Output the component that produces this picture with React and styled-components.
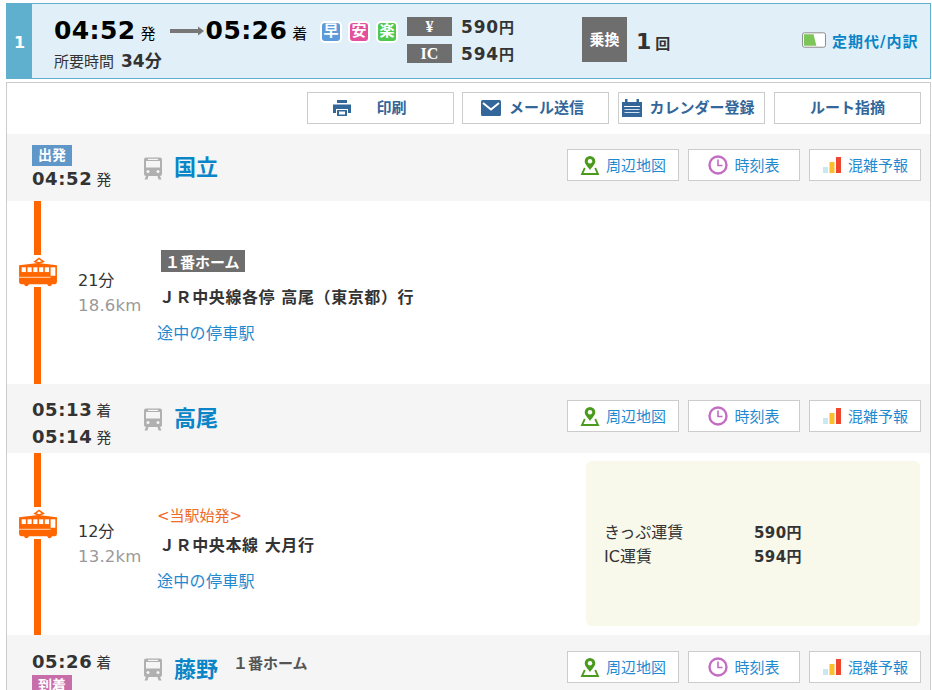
import React from "react";
import styled, { createGlobalStyle } from "styled-components";

const Global = createGlobalStyle`
  html, body { margin: 0; padding: 0; height: 690px; overflow: hidden; background: #fff; }
  body { font-family: "DejaVu Sans", "Noto Sans CJK JP", sans-serif; color: #333; }
  * { box-sizing: border-box; }
`;
const Page = styled.div`
  width: 932px; height: 690px; overflow: hidden; padding: 3px 1px 0 6px;
`;
const Summary = styled.div`
  height: 76px; display: flex; background: #e1f0f8; border: 1px solid #5fb0ce;
`;
const RouteNo = styled.div`
  width: 25px; background: #5fb0ce; color: #fff; font-weight: 700; font-size: 16px;
  display: flex; align-items: center; justify-content: center; padding-top: 2px;
`;
const TimeBlock = styled.div`
  width: 288px; padding: 10px 0 0 22px;
`;
const TimeLine = styled.div`
  display: flex; align-items: baseline; height: 33px; color: #000;
`;
const BigTime = styled.span`
  font-size: 25px; font-weight: 700; line-height: 33px; letter-spacing: 0.4px;
`;
const Suffix = styled.span`
  font-size: 15px; margin-left: 5px;
`;
const ArrowBox = styled.svg`
  width: 34px; height: 10px; margin: 1px 2px 0 14px; align-self: center;
`;
const Duration = styled.div`
  display: flex; align-items: baseline; font-size: 15px; color: #333; margin-top: 0;
  & > b { font-size: 17px; margin-left: 7px; }
`;
const Badges = styled.div`
  width: 87px; display: flex; gap: 6px; padding-top: 17px;
`;
const Badge = styled.span`
  width: 22px; height: 22px; border-radius: 5px; background: ${p => p.$c}; border: 2px solid #fff;
  color: #fff; font-size: 15px; font-weight: 700; line-height: 17px; text-align: center; overflow: hidden;
`;
const Fares = styled.div`
  width: 175px; padding-top: 13px; display: flex; flex-direction: column; gap: 8px;
`;
const FareRow = styled.div`
  display: flex; align-items: center; height: 19px;
`;
const FareTag = styled.span`
  width: 45px; height: 19px; background: #6e6e6e; color: #fff; font-family: "Liberation Serif", serif;
  font-weight: 700; font-size: 16px; line-height: 19px; text-align: center;
`;
const FareValue = styled.span`
  font-size: 17px; font-weight: 700; color: #333; margin-left: 9px; letter-spacing: 0.8px;
  & > small { font-size: 15px; margin-left: 0; letter-spacing: 0; }
`;
const Transfer = styled.div`
  width: 220px; display: flex; padding-top: 13px;
`;
const TransferTag = styled.div`
  width: 45px; height: 45px; background: #6e6e6e; color: #fff; font-size: 15px; font-weight: 700;
  display: flex; align-items: center; justify-content: center; padding-bottom: 2px;
`;
const TransferCount = styled.div`
  margin-left: 9px; display: flex; align-items: baseline; color: #333; font-weight: 700; height: 45px; padding-top: 12px;
  font-size: 22px;
  & > small { font-size: 15px; margin-left: 4px; }
`;
const Pass = styled.a`
  display: flex; align-items: center; gap: 6px; height: 20px; margin-top: 26px;
  color: #0a85c7; font-size: 15px; font-weight: 700; white-space: nowrap; letter-spacing: 1px;
`;
const Main = styled.div`
  margin-top: 3px; height: 700px; border: 1px solid #ccc; border-bottom: 0;
`;
const Toolbar = styled.div`
  height: 51px; padding: 9px 9px 0 0; display: flex; justify-content: flex-end; gap: 9px;
  & > :first-child { margin-right: -1px; }
`;
const ToolButton = styled.a`
  width: 147px; height: 32px; border: 1px solid #ccc; background: #fff; color: #336699;
  font-size: 15px; font-weight: 700; line-height: 30px; display: flex; align-items: flex-start; justify-content: center;
  gap: ${p => p.$gap || 8}px; padding-right: ${p => p.$pr || 0}px; white-space: nowrap;
  & > svg { align-self: center; }
`;
const Station = styled.div`
  height: ${p => p.$h}px; background: #f5f5f5; display: flex; align-items: center;
`;
const StationTimes = styled.div`
  width: 112px; padding: ${p => p.$pt || 0}px 0 0 25px; flex: none; display: flex; flex-direction: column;
  align-self: ${p => p.$start ? "flex-start" : "center"};
`;
const Tag = styled.span`
  width: 40px; height: 21px; background: ${p => p.$c}; color: #fff; font-size: 14px; font-weight: 700;
  line-height: 20px; text-align: center; display: block; flex: none;
`;
const TimeRow = styled.div`
  height: ${p => p.$h || 27}px; display: flex; align-items: center; color: #333; white-space: nowrap;
  & > b { font-size: 18px; letter-spacing: 0.6px; }
  & > span { font-size: 15px; margin-left: 4px; }
`;
const StationIcon = styled.svg`
  width: 20px; height: 24px; margin-left: 24px; flex: none;
`;
const StationName = styled.a`
  font-size: 22px; font-weight: 700; color: #0a85c7; margin-left: 11px; white-space: nowrap; padding-bottom: 5px;
`;
const Platform = styled.span`
  font-size: 15px; font-weight: 700; color: #555; margin: -14px 0 0 15px; white-space: nowrap;
`;
const StationActions = styled.div`
  margin-left: auto; padding-right: 9px; display: flex; gap: 9px; align-self: flex-start;
  margin-top: ${p => p.$mt}px;
`;
const ActionButton = styled.a`
  width: 112px; height: 32px; background: #fff; border: 1px solid #ccc; color: #1f8ad0; font-size: 15px;
  line-height: 32px; display: flex; align-items: flex-start; justify-content: center; gap: 6px; white-space: nowrap;
  & > svg { align-self: center; }
`;
const Segment = styled.div`
  height: ${p => p.$h}px; display: flex; position: relative;
`;
const LineCol = styled.div`
  width: 71px; flex: none; position: relative;
  &::before { content: ""; position: absolute; left: 27px; top: 0; bottom: 0; width: 7px; background: #f60; }
`;
const TrainMark = styled.svg`
  position: absolute; left: 11px; top: 54px; width: 40px; height: 32px; background: #fff;
`;
const RideTime = styled.div`
  width: 79px; flex: none; padding-top: ${p => p.$top}px; font-size: 16px; color: #333; line-height: 25px;
  & > div + div { color: #999; font-size: 16.5px; letter-spacing: 0.2px; }
`;
const RideInfo = styled.div`
  flex: 1; padding-top: ${p => p.$top}px; min-width: 0;
`;
const PlatformTag = styled.span`
  display: inline-block; margin-left: 4px; background: #6e6e6e; color: #fff; font-size: 15px; font-weight: 700;
  height: 22px; line-height: 26px; padding: 0 0 0 4px; width: 84px; white-space: nowrap; overflow: hidden;
`;
const Origin = styled.div`
  color: #f06a28; font-size: 15px; height: 22px; line-height: 24px;
`;
const LineName = styled.div`
  font-size: 16px; font-weight: 700; color: #333; margin: ${p => p.$mt}px 0 0 2px; line-height: 24px; white-space: nowrap;
  letter-spacing: 0.6px;
`;
const Stops = styled.a`
  display: block; font-size: 16px; color: #1f8ad0; margin-top: 12px; line-height: 24px; letter-spacing: 0.3px;
`;
const FarePanel = styled.div`
  position: absolute; right: 10px; top: 8px; width: 334px; height: 165px; background: #f8f8eb; border-radius: 6px;
  padding: 58px 0 0 18px; font-size: 16px; color: #333;
`;
const PanelRow = styled.div`
  display: flex; height: 24px; align-items: center;
  & > span { width: 150px; } & > b { font-size: 15px; letter-spacing: 0.4px; }
`;

const PinIcon = () => (
  <svg width="20" height="20" viewBox="0 0 20 20" fill="none">
    <path d="M10 1a5.300 5.300 0 0 1 5.300 5.300c0 3-3.300 5.700-5.300 8.700-2-3-5.300-5.700-5.300-8.700A5.300 5.300 0 0 1 10 1z" fill="#4a9a1e" />
    <circle cx="10" cy="6.300" r="2.200" fill="#fff" />
    <path d="M4.800 13L2 19h16l-2.800-6" stroke="#4a9a1e" strokeWidth="1.800" fill="none" />
  </svg>
);
const ClockIcon = () => (
  <svg width="20" height="20" viewBox="0 0 20 20" fill="none">
    <circle cx="10" cy="10" r="8.500" stroke="#c46cc4" strokeWidth="2.400" />
    <path d="M10 4.500V10.500H14.500" stroke="#c46cc4" strokeWidth="1.600" />
  </svg>
);
const BarsIcon = () => (
  <svg width="20" height="20" viewBox="0 0 20 20">
    <rect x="1" y="12" width="5" height="6" fill="#c9e8f2" />
    <rect x="7.500" y="7" width="5" height="11" fill="#fbbe2e" />
    <rect x="14" y="2" width="5" height="16" fill="#f0452f" />
  </svg>
);
const StationActionsSet = ({ mt }) => (
  <StationActions $mt={mt}>
    <ActionButton><PinIcon />周辺地図</ActionButton>
    <ActionButton><ClockIcon />時刻表</ActionButton>
    <ActionButton><BarsIcon />混雑予報</ActionButton>
  </StationActions>
);
const Rail = () => (
  <StationIcon viewBox="0 0 20 24">
    <path d="M3 1.500h14a2 2 0 0 1 2 2V18a2 2 0 0 1-2 2H3a2 2 0 0 1-2-2V3.500a2 2 0 0 1 2-2z" fill="#b0b0b0" />
    <rect x="3" y="5" width="14" height="6.500" fill="#f5f5f5" />
    <rect x="5" y="2.800" width="10" height="1.200" fill="#f5f5f5" />
    <circle cx="5" cy="15.500" r="1.500" fill="#f5f5f5" /><circle cx="15" cy="15.500" r="1.500" fill="#f5f5f5" />
    <path d="M3 20l-1.500 3.500h3L5.500 20zM17 20l1.500 3.500h-3L14.500 20z" fill="#b0b0b0" />
  </StationIcon>
);
const Tram = () => (
  <TrainMark viewBox="1 0 38 30">
    <path d="M17 6l4-3 4 3-4 1.500z" fill="none" stroke="#f60" strokeWidth="1.500" />
    <path d="M2 9.500l18-2 18 2v16a2 2 0 0 1-2 2H4a2 2 0 0 1-2-2z" fill="#f60" />
    {[4.500, 10, 15.500, 21, 26.500].map(x => <rect key={x} x={x} y="11.500" width="4" height="4.500" fill="#fff" />)}
    <rect x="32" y="11.500" width="4.500" height="8" fill="#fff" />
    <rect x="2" y="20.500" width="30" height="1" fill="#ffd0a8" />
    <circle cx="9" cy="27.500" r="2" fill="#f60" /><circle cx="31" cy="27.500" r="2" fill="#f60" />
  </TrainMark>
);

export default function App() {
  return (
    <Page>
      <Global />
      <Summary>
        <RouteNo>1</RouteNo>
        <TimeBlock>
          <TimeLine>
            <BigTime>04:52</BigTime><Suffix>発</Suffix>
            <ArrowBox viewBox="0 0 34 10"><path d="M0 3h28V0.500l6 4.500-6 4.500V7H0z" fill="#777" /></ArrowBox>
            <BigTime>05:26</BigTime><Suffix>着</Suffix>
          </TimeLine>
          <Duration>所要時間<b>34分</b></Duration>
        </TimeBlock>
        <Badges>
          <Badge $c="#5b9bdc">早</Badge>
          <Badge $c="#e3509b">安</Badge>
          <Badge $c="#4fc94f">楽</Badge>
        </Badges>
        <Fares>
          <FareRow><FareTag>¥</FareTag><FareValue>590<small>円</small></FareValue></FareRow>
          <FareRow><FareTag>IC</FareTag><FareValue>594<small>円</small></FareValue></FareRow>
        </Fares>
        <Transfer>
          <TransferTag>乗換</TransferTag>
          <TransferCount>1<small>回</small></TransferCount>
        </Transfer>
        <Pass>
          <svg width="24" height="17" viewBox="0 0 25 17">
            <rect x=".5" y=".5" width="24" height="15" rx="2" fill="#fff" stroke="#888" />
            <path d="M2 2h10l3 12H2z" fill="#7cc558" />
          </svg>
          定期代/内訳
        </Pass>
      </Summary>
      <Main>
        <Toolbar>
          <ToolButton $gap={24} $pr={22}>
            <svg width="20" height="18" viewBox="0 0 20 18">
              <path d="M5 1h10v3H5zM1 5.500h18V14h-3v-4H4v4H1z" fill="#336699" />
              <path d="M5 11h10v6H5z" fill="#336699" /><path d="M7 12.500h6v3H7z" fill="#fff" />
            </svg>
            印刷
          </ToolButton>
          <ToolButton $pr={6}>
            <svg width="20" height="16" viewBox="0 0 20 16">
              <rect width="20" height="16" rx="1.500" fill="#336699" />
              <path d="M2 3l8 6.500L18 3" stroke="#fff" strokeWidth="2" fill="none" />
            </svg>
            メール送信
          </ToolButton>
          <ToolButton $gap={7} $pr={6}>
            <svg width="20" height="20" viewBox="0 0 20 20">
              <path d="M0 4h20v15H0z" fill="#336699" /><path d="M2 8h16v1H2z" fill="#fff" />
              <path d="M3 1h2.500v5H3zM14.500 1H17v5h-2.500z" fill="#336699" />
              <path d="M2.500 11h15v1h-15zM2.500 14h15v1h-15z" fill="#cfe0ee" />
            </svg>
            カレンダー登録
          </ToolButton>
          <ToolButton>ルート指摘</ToolButton>
        </Toolbar>

        <Station $h={67}>
          <StationTimes>
            <Tag $c="#5f97c9">出発</Tag>
            <TimeRow $h={24}><b>04:52</b><span>発</span></TimeRow>
          </StationTimes>
          <Rail />
          <StationName>国立</StationName>
          <StationActionsSet mt={15} />
        </Station>
        <Segment $h={183}>
          <LineCol><Tram /></LineCol>
          <RideTime $top={67}><div>21分</div><div>18.6km</div></RideTime>
          <RideInfo $top={49}>
            <PlatformTag>１番ホーム</PlatformTag>
            <LineName $mt={10}>ＪＲ中央線各停 高尾（東京都）行</LineName>
            <Stops>途中の停車駅</Stops>
          </RideInfo>
        </Segment>

        <Station $h={69}>
          <StationTimes $pt={8}>
            <TimeRow><b>05:13</b><span>着</span></TimeRow>
            <TimeRow><b>05:14</b><span>発</span></TimeRow>
          </StationTimes>
          <Rail />
          <StationName>高尾</StationName>
          <StationActionsSet mt={16} />
        </Station>
        <Segment $h={182}>
          <LineCol><Tram /></LineCol>
          <RideTime $top={66}><div>12分</div><div>13.2km</div></RideTime>
          <RideInfo $top={51}>
            <Origin>&lt;当駅始発&gt;</Origin>
            <LineName $mt={8}>ＪＲ中央本線 大月行</LineName>
            <Stops>途中の停車駅</Stops>
          </RideInfo>
          <FarePanel>
            <PanelRow><span>きっぷ運賃</span><b>590円</b></PanelRow>
            <PanelRow><span>IC運賃</span><b>594円</b></PanelRow>
          </FarePanel>
        </Segment>

        <Station $h={68}>
          <StationTimes $start $pt={13}>
            <TimeRow><b>05:26</b><span>着</span></TimeRow>
            <Tag $c="#c76daa">到着</Tag>
          </StationTimes>
          <Rail />
          <StationName>藤野</StationName>
          <Platform>１番ホーム</Platform>
          <StationActionsSet mt={16} />
        </Station>
      </Main>
    </Page>
  );
}
